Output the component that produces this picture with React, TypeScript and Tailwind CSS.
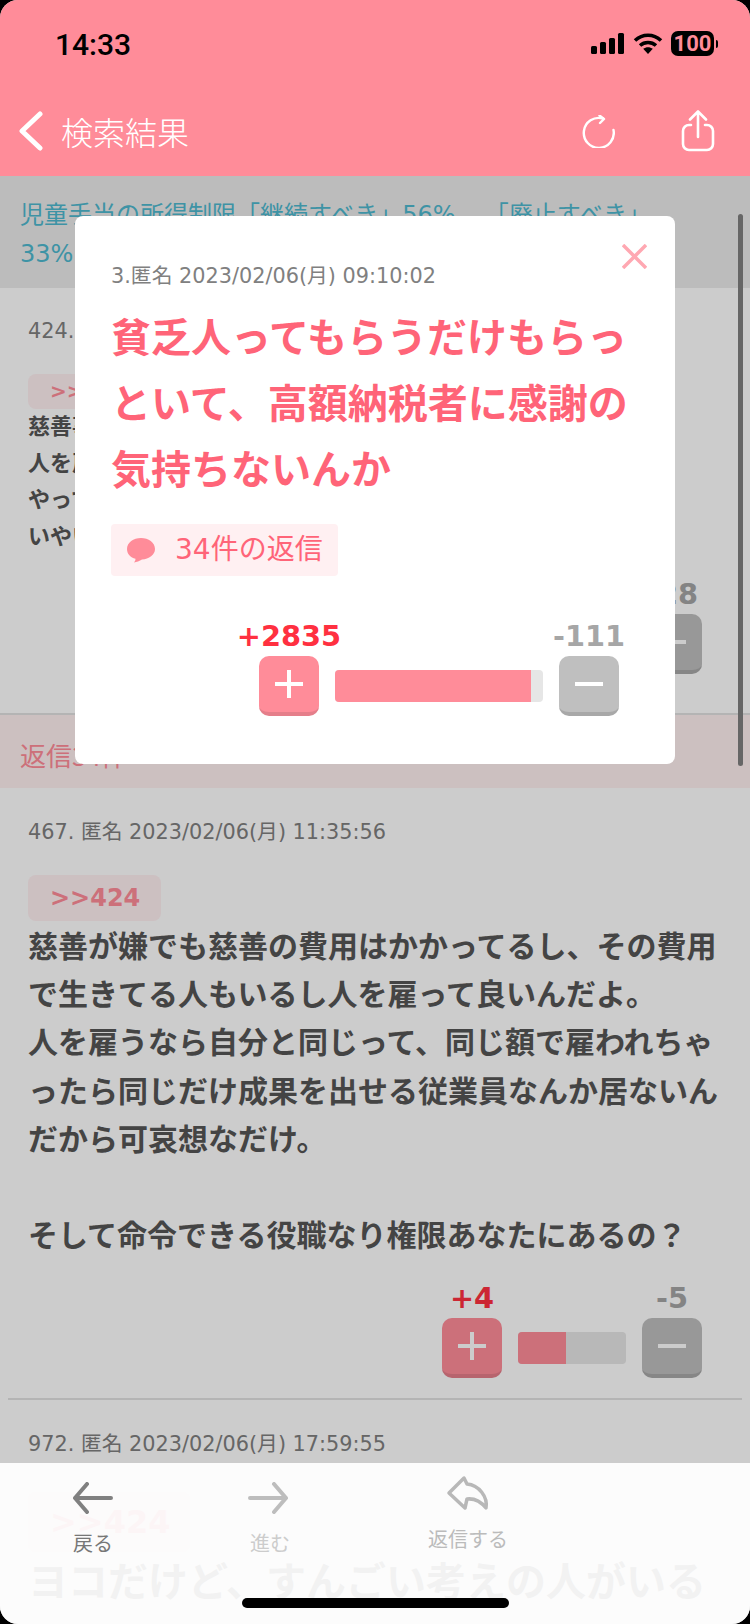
const pink = "text-[#ff6478]"

const StatusIcons = () => (
  <div className="flex items-center gap-[8px]">
    <svg width="34" height="21" viewBox="0 0 34 21" fill="black">
      <rect x="0" y="13" width="6" height="8" rx="1.5" />
      <rect x="9" y="9" width="6" height="12" rx="1.5" />
      <rect x="18" y="5" width="6" height="16" rx="1.5" />
      <rect x="27" y="0" width="6" height="21" rx="1.5" />
    </svg>
    <svg width="30" height="21" viewBox="0 0 30 21" fill="none" stroke="black" strokeWidth="3.6">
      <path d="M2 7.5C9.5 .5 20.500 .5 28 7.5" />
      <path d="M7 12.500C11.500 8.500 18.500 8.500 23 12.500" />
      <path d="M15 21l-4.800-5.200c2.800-2.200 6.800-2.200 9.600 0z" fill="black" stroke="none" />
    </svg>
    <div className="flex items-center">
      <div className="w-[43px] h-[25px] rounded-[7px] bg-black text-[#ff8c99] flex items-center justify-center font-['Roboto',sans-serif] font-bold text-[22px] leading-none">
        100
      </div>
      <div className="w-[2px] h-[8px] ml-[2px] rounded-r-[2px] bg-black" />
    </div>
  </div>
)

const Header = () => (
  <header className="relative z-20 h-[176px] bg-[#ff8c99]">
    <div className="flex items-start justify-between pl-[55px] pr-[32px] pt-[26px] h-[100px]">
      <span className="font-['Roboto',sans-serif] font-medium text-[30px] leading-[38px] text-black">14:33</span>
      <div className="pt-[5px]">
        <StatusIcons />
      </div>
    </div>
    <div className="flex items-center h-[60px] pl-[18px] pr-[35px] mt-[1px]">
      <svg width="26" height="40" viewBox="0 0 26 40" fill="none" stroke="white" strokeWidth="5" strokeLinecap="round" strokeLinejoin="round">
        <path d="M22 3L4 20l18 17" />
      </svg>
      <span className="ml-[17px] font-['Noto_Sans_CJK_JP',sans-serif] font-light text-[32px] text-white">検索結果</span>
      <div className="ml-auto flex items-center gap-[66px]">
        <svg width="33" height="33" viewBox="0 0 33 33" fill="none" stroke="white" strokeWidth="2.400" strokeLinecap="round" strokeLinejoin="round">
          <path d="M21 3.500A15 15 0 1 0 31.500 15" />
          <path d="M17.500 .5L22 4l-4 4" />
        </svg>
        <svg width="34" height="42" viewBox="0 0 34 42" fill="none" stroke="white" strokeWidth="2.600" strokeLinecap="round" strokeLinejoin="round">
          <path d="M17 27V2M9 9.500L17 1.500l8 8" />
          <path d="M10 15H8a6 6 0 0 0-6 6v13a6 6 0 0 0 6 6h18a6 6 0 0 0 6-6V21a6 6 0 0 0-6-6h-2" />
        </svg>
      </div>
    </div>
  </header>
)

type VoteProps = {
  plus: string
  minus: string
  fill: string
  dim?: boolean
}

// same widget in the modal and (dimmed by the overlay) in the posts
const Votes = ({ plus, minus, fill, dim }: VoteProps) => (
  <div className="flex items-end justify-end gap-4 pr-5">
    <div className="flex flex-col items-center w-[60px]">
      <span className="whitespace-nowrap font-bold text-[28.800px] leading-[34px] mb-[3px] text-[#ff3040]">{plus}</span>
      <button className="w-[60px] h-[60px] rounded-[10px] bg-[#ff8c99] border-b-4 border-[#e57e8a] flex items-center justify-center">
        <svg width="28" height="28" viewBox="0 0 28 28" stroke="white" strokeWidth="4">
          <path d="M0 14H28M14 0V28" />
        </svg>
      </button>
    </div>
    <div className={`${dim ? "w-[108px]" : "w-[208px]"} h-[32px] mb-[14px] rounded-[4px] bg-[#e6e6e6] overflow-hidden`}>
      <div className="h-full bg-[#ff8c99]" style={{ width: fill }} />
    </div>
    <div className="flex flex-col items-center w-[60px]">
      <span className="whitespace-nowrap font-bold text-[28.800px] leading-[34px] mb-[3px] text-[#a6a6a6]">{minus}</span>
      <button className="w-[60px] h-[60px] rounded-[10px] bg-[#bfbfbf] border-b-4 border-[#a8a8a8] flex items-center justify-center">
        <svg width="28" height="28" viewBox="0 0 28 28" stroke="white" strokeWidth="4">
          <path d="M0 14H28" />
        </svg>
      </button>
    </div>
  </div>
)

const Meta = ({ children }: { children: string }) => (
  <p className="text-[20.800px] leading-[30px] text-[#808080]">{children}</p>
)

const Thread = () => (
  <main>
    <div className="h-[112px] bg-[#ececec] px-5 pt-5 text-[24px] leading-[39px] text-[#4eb8cf]">
      児童手当の所得制限「継続すべき」56%<span className="ml-[29px]">「廃止すべき」</span>
      <br />
      33%
    </div>

    <section className="px-7 pt-7 pb-[39px] border-b-2 border-[#e2e2e2] bg-white">
      <Meta>424. 匿名 2023/02/06(月) 10:48:21</Meta>
      <div className="mt-7 w-[133px] h-[35px] rounded-lg bg-[#fff0f2] px-[22px] font-bold text-[20px] leading-[35px] text-[#ff8c99]">&gt;&gt;414</div>
      <p className="font-bold text-[22px] leading-[36.500px] text-[#555]">
        慈善事業じゃないんだから
        <br />
        人を雇うのにお金はかかる
        <br />
        やってられないよ
        <br />
        いやいや
      </p>
      <div className="mt-[22px]">
        <Votes plus="+52" minus="-28" fill="65%" dim />
      </div>
    </section>

    <div className="h-[73px] bg-[#fff0f0] pl-5 font-['Noto_Sans_CJK_JP',sans-serif] text-[26px] leading-[80px] text-[#ff8c99]">返信34件</div>

    <section className="px-7 pt-[29px] pb-5 bg-white">
      <Meta>467. 匿名 2023/02/06(月) 11:35:56</Meta>
      <div className="mt-7 w-[133px] h-[46px] rounded-lg bg-[#fff0f2] px-[22px] font-bold text-[24px] leading-[46px] text-[#ff8c99]">&gt;&gt;424</div>
      <p className="mt-[2px] font-bold text-[30px] leading-[48.200px] text-[#555]">
        慈善が嫌でも慈善の費用はかかってるし、その費用で生きてる人もいるし人を雇って良いんだよ。
        <br />
        人を雇うなら自分と同じって、同じ額で雇われちゃったら同じだけ成果を出せる従業員なんか居ないんだから可哀想なだけ。
        <br />
        <br />
        そして命令できる役職なり権限あなたにあるの？
      </p>
      <div className="mt-[21px]">
        <Votes plus="+4" minus="-5" fill="44%" dim />
      </div>
    </section>
    <div className="mx-2 h-[2px] bg-[#e2e2e2]" />

    <section className="px-7 pt-[29px] bg-white">
      <Meta>972. 匿名 2023/02/06(月) 17:59:55</Meta>
      <div className="mt-[33px] w-[162px] h-[60px] rounded-lg bg-[#fff0f2] px-[22px] font-bold text-[32px] leading-[60px] text-[#ff8c99]">&gt;&gt;424</div>
      <p className="mt-[2px] whitespace-nowrap font-bold text-[40px] leading-[56px] text-[#555]">ヨコだけど、すんごい考えの人がいる</p>
    </section>
  </main>
)

const Modal = () => (
  <div className="absolute left-[75px] top-[216px] z-10 w-[600px] h-[548px] rounded-lg bg-white px-9 pt-[45px]">
    <svg className="absolute right-[28px] top-[28px]" width="25" height="25" viewBox="0 0 25 25" stroke="#ffa8b2" strokeWidth="3.500">
      <path d="M1 1L24 24M24 1L1 24" />
    </svg>
    <Meta>3.匿名 2023/02/06(月) 09:10:02</Meta>
    <h2 className={`mt-[11px] font-['Noto_Sans_CJK_JP',sans-serif] font-bold text-[40px] leading-[66px] ${pink}`}>
      貧乏人ってもらうだけもらっといて、高額納税者に感謝の気持ちないんか
    </h2>
    <div className="mt-6 flex items-center w-[227px] h-[52px] rounded-[4px] bg-[#fff0f2] pl-4">
      <svg width="28" height="26" viewBox="0 0 28 26" fill="#ff8c99">
        <path d="M14 1C21.500 1 28 5.500 28 12C28 18 22 22 15 22.500C12.500 24 9.500 25 7 25.500C8 24.500 8.500 23 8.500 21.800C3.500 20.500 0 17 0 12C0 5.500 6.500 1 14 1Z" />
      </svg>
      <span className={`ml-5 font-normal text-[28px] leading-none ${pink}`}>34件の返信</span>
    </div>
    <div className="mt-[43px]">
      <Votes plus="+2835" minus="-111" fill="94%" />
    </div>
  </div>
)

const BottomBar = () => (
  <nav className="absolute left-0 right-0 bottom-0 z-20 h-[161px] bg-[#ffffff]/93">
    <div className="absolute left-[73px] top-[19px] flex flex-col items-center w-[40px]">
      <svg width="40" height="32" viewBox="0 0 40 32" fill="none" stroke="#808080" strokeWidth="4" strokeLinecap="round" strokeLinejoin="round">
        <path d="M38 16H2M14 2L2 16l12 14" />
      </svg>
      <span className="mt-[15px] whitespace-nowrap font-['Noto_Sans_CJK_JP',sans-serif] text-[20px] leading-[28px] text-[#777]">戻る</span>
    </div>
    <div className="absolute left-[248px] top-[19px] flex flex-col items-center w-[40px]">
      <svg width="40" height="32" viewBox="0 0 40 32" fill="none" stroke="#bdbdbd" strokeWidth="4" strokeLinecap="round" strokeLinejoin="round">
        <path d="M2 16H38M26 2L38 16L26 30" />
      </svg>
      <span className="mt-[15px] ml-1 whitespace-nowrap font-['Noto_Sans_CJK_JP',sans-serif] text-[20px] leading-[28px] text-[#ccc]">進む</span>
    </div>
    <div className="absolute left-[428px] top-[12px] flex flex-col items-center w-[80px]">
      <svg width="44" height="36" viewBox="0 0 44 36" fill="none" stroke="#b8b8b8" strokeWidth="3.500" strokeLinecap="round" strokeLinejoin="round">
        <path d="M18 3L3 18L19 33L21 24C30 23 36 28 40 33C42 22 33 10 21 9Z" />
      </svg>
      <span className="mt-[14px] whitespace-nowrap font-['Noto_Sans_CJK_JP',sans-serif] text-[20px] leading-[28px] text-[#bbb]">返信する</span>
    </div>
    <div className="absolute left-[242px] bottom-[16px] w-[267px] h-[10px] rounded-full bg-black" />
  </nav>
)

export default function App() {
  return (
    <div className="w-[750px] h-[1624px] bg-black">
      <div className="relative w-full h-full overflow-hidden rounded-[18px] bg-white font-['DejaVu_Sans','Noto_Sans_CJK_JP',sans-serif]">
        <Header />
        <Thread />
        {/* dim layer sits over the thread, header and bottom bar stay bright */}
        <div className="absolute inset-0 z-[5] bg-black/20" />
        <Modal />
        <div className="absolute left-[738px] top-[214px] z-10 w-[5px] h-[552px] rounded-full bg-[#666]" />
        <BottomBar />
      </div>
    </div>
  )
}
